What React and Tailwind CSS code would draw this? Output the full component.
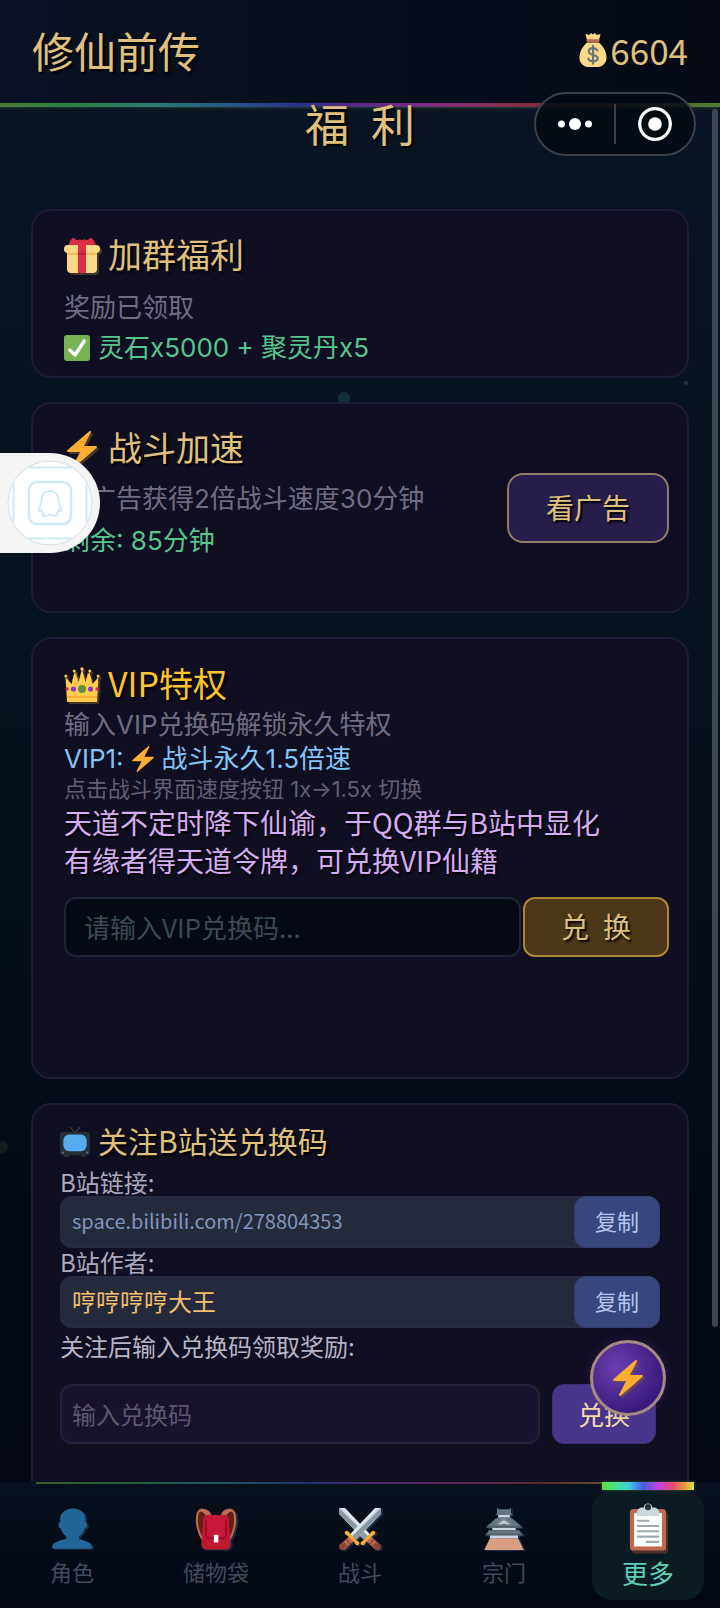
import React from "react";

function Icon({ size = "size-9", shadow = true, children }) {
  return (
    <svg
      viewBox="0 0 36 36"
      aria-hidden="true"
      className={`${size} shrink-0 ${shadow ? "drop-shadow-[2px_2px_0_rgba(120,95,50,0.5)]" : ""}`}
    >
      {children}
    </svg>
  );
}

const Bolt = () => (
  <path fill="#FFAC33" d="M32.938 15.651C32.792 15.26 32.418 15 32 15H19.925L26.89 1.458c.219-.426.106-.947-.271-1.243C26.437.071 26.218 0 26 0c-.233 0-.466.082-.653.243L18 6.588 3.347 19.243c-.316.273-.43.714-.284 1.105S3.582 21 4 21h12.075L9.11 34.542c-.219.426-.106.947.271 1.243.182.144.401.215.619.215.233 0 .466-.082.653-.243L18 29.412l14.653-12.655c.317-.273.43-.714.285-1.106z" />
);

const Check = () => (
  <>
    <rect width="36" height="36" rx="4" fill="#77B255" />
    <path fill="#FFF" d="M29.28 6.362c-1.156-.751-2.704-.422-3.458.736L14.936 23.877l-5.029-4.65c-1.014-.938-2.596-.875-3.533.138-.937 1.014-.875 2.596.139 3.533l7.209 6.666c.48.445 1.09.665 1.696.665.673 0 1.534-.282 2.099-1.139.332-.506 12.5-19.27 12.5-19.27.751-1.159.421-2.707-.737-3.458z" />
  </>
);

const Gift = () => (
  <>
    <path fill="#FDD888" d="M33 31a4 4 0 0 1-4 4H7a4 4 0 0 1-4-4V14h30z" />
    <path fill="#FCAB40" d="M3 15h30v1.5H3z" />
    <path fill="#FDD888" d="M36 11a4 4 0 0 1-4 4H4a4 4 0 0 1 0-8h28a4 4 0 0 1 4 4z" />
    <path fill="#DA2F47" d="M14 6h8v29h-8z" />
    <path fill="#DA2F47" d="M18 7H5c0-3 2-6 4-7 2-.5 2 2 4 2s3-1.500 5 .5c2-2 3-.5 5-.5s2-2.500 4-2c2 1 4 4 4 7z" />
    <path fill="#A0041E" opacity=".55" d="M14 15h8v1.500h-8z" />
  </>
);

const Crown = () => (
  <>
    <path fill="#F4900C" d="M14.200 13 12 5l-3.500 8zM27.500 13 24 5l-2.200 8z" />
    <path fill="#FFCC4D" d="m3 35-1.500-25 6 7 3-12 4 10 3.500-13 3.500 13 4-10 3 12 6-7L33 35z" />
    <circle cx="1.800" cy="9" r="1.500" fill="#FFCC4D" />
    <circle cx="10.200" cy="4" r="1.500" fill="#FFCC4D" />
    <circle cx="18" cy="2" r="1.700" fill="#FFCC4D" />
    <circle cx="25.800" cy="4" r="1.500" fill="#FFCC4D" />
    <circle cx="34.200" cy="9" r="1.500" fill="#FFCC4D" />
    <path fill="#FFAC33" d="M3 29h30v2H3z" />
    <circle cx="18" cy="22" r="4" fill="#5C913B" />
    <circle cx="9.500" cy="22" r="2.600" fill="#9236CC" />
    <circle cx="26.500" cy="22" r="2.600" fill="#9236CC" />
    <circle cx="3" cy="22" r="1.700" fill="#DA2F47" />
    <circle cx="33" cy="22" r="1.700" fill="#DA2F47" />
  </>
);

const Television = () => (
  <>
    <path d="M12 0l6 7 6-7" fill="none" stroke="#3b464f" strokeWidth="1.300" />
    <rect x="0" y="6" width="36" height="28" rx="4" fill="#252f36" />
    <path fill="#292F33" d="M4 32h7v4H5zM25 32h7l-1 4h-6z" />
    <rect x="4" y="9" width="28" height="20" rx="7" fill="#55ACEE" />
    <circle cx="3.500" cy="30.500" r="1.200" fill="#66757F" />
    <circle cx="32.500" cy="30.500" r="1.200" fill="#66757F" />
  </>
);

const MoneyBag = () => (
  <>
    <path fill="#FDD888" d="M31.900 22.500C31 17 27 12 24 10H12C9 12 5 17 4.100 22.500 2 30 7 36 13 36h10c6 0 11-6 8.900-13.500z" />
    <path fill="#FDD888" d="M12 9 10 1l4 1 2-2 2 1.500L20 0l2 2 4-1-2 8z" />
    <rect x="11" y="6.500" width="14" height="2.800" rx="1.400" fill="#BF6952" />
    <path d="M22.500 18.500c-1-2-2.600-2.500-4.500-2.500-2.700 0-4.500 1.300-4.500 3.500 0 5 9.500 2.500 9.500 7 0 2.400-2.300 3.500-5 3.500-2.400 0-4.300-1-5-3M18 13.500v19" fill="none" stroke="#67757F" strokeWidth="2.300" strokeLinecap="round" />
  </>
);

const Person = () => (
  <path fill="#226699" d="M24 26.799v-2.566c2-1.348 4.080-3.779 4.703-6.896.186.103.206.17.413.17.991 0 1.709-1.287 1.709-2.873 0-1.562-.823-2.827-1.794-2.865.187-.674.293-1.577.293-2.735C29.324 5.168 26 .527 18.541.527c-6.629 0-10.777 4.641-10.777 8.507 0 1.123.069 2.043.188 2.755-.911.137-1.629 1.352-1.629 2.845 0 1.587.804 2.873 1.796 2.873.206 0 .025-.067.209-.17C8.952 20.453 11 22.885 13 24.232v2.414c-5 .645-12 3.437-12 6.230v1.061C1 35 2.076 35 3.137 35h29.725C33.924 35 35 35 35 33.938v-1.061c0-2.615-6-5.225-11-6.078z" />
);

const Backpack = () => (
  <>
    <path fill="#662113" d="M3 2c-3 8-1 20 5 27l5-20zM33 2c3 8 1 20-5 27L23 9z" />
    <path d="M12 9C11 2 5-1 2.500 4 0 12 3 22 7 28M24 9c1-7 7-10 9.500-5C36 12 33 22 29 28" fill="none" stroke="#BF6952" strokeWidth="1.800" />
    <path fill="#BF6952" d="M4 1c5-1.500 9 1 10 6l-4 2C9 5 7 3 3 3zM32 1c-5-1.500-9 1-10 6l4 2c1-4 3-6 7-6z" />
    <path fill="#BE1931" d="M11 6h14c3 0 4 2 4 4l1.500 21c0 3-1.500 4.500-4 4.500h-17c-2.500 0-4-1.500-4-4.500L7 10c0-2 1-4 4-4z" />
    <path fill="#C8183A" d="M11 6h14c2 0 3 2 3 4v12c0 3-2 4.500-4 4.500H12c-2 0-4-1.500-4-4.500V10c0-2 1-4 3-4z" />
    <path d="M9.500 10v13c0 2 1 3 3 3h11c2 0 3-1 3-3V10" fill="none" stroke="#A0041E" strokeWidth="1.300" />
    <path fill="#FFF" d="M16.200 23h3.800v6.500h-3.800z" />
  </>
);

const Sword = () => (
  <>
    <path fill="#CCD6DD" d="M36 0v5L15 27l-5-4L31 0z" />
    <path fill="#8899A6" d="m36 0-25 24.500 3.500 2.500L36 5z" />
    <path fill="#E1E8ED" d="M31 0h3L10.500 24.500 9 23z" />
    <path fill="#BF6952" d="m8.500 24.500 4 4-8 7.500-4-4z" />
    <path d="m6 27 4 4M3.500 29.500l4 4" stroke="#8A4633" strokeWidth="1.300" />
    <path fill="#FFAC33" d="M5.500 20c1.500-1.200 3 0 3.500 1.500l6.500 6.500c1.500.5 2.600 2 1.500 3.300-1.500 1.500-3.300 0-3.500-1.500L7 23.500c-1.500-.5-3-2-1.500-3.500z" />
    <circle cx="2.800" cy="33.200" r="2.700" fill="#8A4633" />
  </>
);

const Swords = () => (
  <>
    <g transform="matrix(-1 0 0 1 36 0)"><Sword /></g>
    <Sword />
  </>
);

const Castle = () => (
  <>
    <path fill="#D99E82" d="M6 26h24l5 10H1z" />
    <path fill="#CCD6DD" d="M6 21h24v5H6zM8 14h20v5H8zM13 4h10v6H13z" />
    <path fill="#66757F" d="M12 0h1v1h10V0h1v5h1v1H11V5h1z" />
    <path fill="#66757F" d="m11 9 3-1h8l3 1 7 6v2H4v-2zM5 19h26l2.500 4H2.500z" />
    <path fill="#4F5D66" d="M3 15.500h30V17H3zM2 22h32v1.500H2z" />
    <path fill="#CCD6DD" d="m13 14 5-3.500 5 3.500h-3l-2-1-2 1z" />
    <path d="m12 13.500 6-4 6 4" fill="none" stroke="#8899A6" strokeWidth="1" />
  </>
);

const Clipboard = () => (
  <>
    <rect x="5" y="5" width="26" height="30" rx="2.500" fill="#C1694F" />
    <path fill="#FFF" d="M8 8h20v24H8z" />
    <path fill="#CCD6DD" d="M22 4h-1a3 3 0 0 0-6 0h-1c-2 0-4 1.500-4 3.500V10h16V7.500C26 5.500 24 4 22 4z" />
    <circle cx="18" cy="3.700" r="2.200" fill="#292F33" />
    <path d="M10 13.500h9M10 17.300h16M10 21.100h16M10 24.900h16M16.500 28.700H26" stroke="#99AAB5" strokeWidth="1.500" />
  </>
);

const CARD = "rounded-[20px] border-2 border-[#1e1b34] bg-[#100e21]";
const GOLD = "text-[#dfc07f] [text-shadow:2px_2px_2px_#000]";
// Inter for Latin letters and digits, Noto for the Chinese ones.
const MIXED = "font-['Inter','Noto_Sans_CJK_SC',sans-serif]";

function CardTitle({ icon, children, tone = GOLD }) {
  return (
    <h2 className={`flex items-center gap-2 text-[34px] leading-[42px] ${tone}`}>
      <span className="pt-1"><Icon>{icon}</Icon></span>
      <span>{children}</span>
    </h2>
  );
}

function CopyRow({ id, label, value, tone }) {
  return (
    <>
      <h3 id={id} className="text-2xl leading-7 text-[#a9a9bb]">{label}</h3>
      <div className="flex h-[52px] rounded-xl border-2 border-[#2a2b40] bg-[#242a3c]">
        <p className={`flex-1 self-center px-2.5 pb-0.5 ${tone}`}>{value}</p>
        <button aria-describedby={id} className="-my-0.5 -mr-0.5 w-[86px] rounded-xl border border-[#353f70] bg-[#37477b] pb-1 text-[22px] text-[#b9c6f2]">
          复制
        </button>
      </div>
    </>
  );
}

const TABS = [
  { label: "角色", art: <Person /> },
  { label: "储物袋", art: <Backpack /> },
  { label: "战斗", art: <Swords /> },
  { label: "宗门", art: <Castle /> },
  { label: "更多", art: <Clipboard />, active: true },
];

export default function App() {
  return (
    <div className="relative flex h-screen flex-col overflow-hidden bg-linear-to-b from-[#0a1424] via-[#06121d] via-40% to-[#030711] font-['Noto_Sans_CJK_SC',sans-serif]">
      <header className="relative flex h-[105px] shrink-0 items-center justify-between bg-linear-to-r from-[#0a1223] to-[#050a15] px-8 pb-1.5">
        <div className={`text-[42px] leading-[46px] ${GOLD}`}>修仙前传</div>
        <div className="flex items-center text-[35px] leading-[46px] text-[#dfc07f]">
          <Icon size="size-[34px]" shadow={false}><MoneyBag /></Icon>
          <span>6604</span>
        </div>
        <div className="absolute inset-x-0 -bottom-0.5 h-1 bg-[linear-gradient(90deg,#4f7a35_0%,#2f7f3c_8%,#2a7a72_22%,#26508a_33%,#2c2f8a_42%,#5a2a86_50%,#7d2c7e_60%,#85304f_70%,#6e2a28_80%,#5c5a28_90%,#4d7d35_100%)] shadow-[0_1px_3px_rgba(50,90,70,0.7)]" />
      </header>

      <i className="absolute top-[392px] left-[47%] size-3 rounded-full bg-[#12323a]" />
      <i className="absolute top-[381px] right-8 size-1 rounded-full bg-[#24343e]" />
      <i className="absolute top-[1141px] -left-1 size-3 rounded-full bg-[#161b20]" />

      <main className="relative -mt-5 min-h-0 flex-1 overflow-y-auto px-[31px] pt-1.5 [scrollbar-width:none]">
        <h1 className={`mb-[54px] text-center text-[44px] leading-[64px] ${GOLD}`}>福&ensp;利</h1>
        <div className="flex flex-col gap-6">
          <section className={`${CARD} pt-[22px] pr-4 pb-[7px] pl-[31px]`}>
            <CardTitle icon={<Gift />}>加群福利</CardTitle>
            <p className="mt-2.5 text-[26px] leading-[42px] text-[#716d80]">奖励已领取</p>
            <p className={`flex items-center gap-2 text-[26px] leading-[42px] text-[#57c58c] ${MIXED}`}>
              <Icon size="size-[26px]" shadow={false}><Check /></Icon>
              <span>灵石x5000 + 聚灵丹x5</span>
            </p>
          </section>

          <section className={`${CARD} flex min-h-[211px] items-center pr-[18px] pl-[31px]`}>
            <div className="flex-1 self-start pt-[22px]">
              <CardTitle icon={<Bolt />}>战斗加速</CardTitle>
              <p className={`mt-2.5 text-[26px] leading-[42px] text-[#716d80] ${MIXED}`}>看广告获得2倍战斗速度30分钟</p>
              <p className={`text-[26px] leading-[42px] text-[#57c58c] ${MIXED}`}>剩余: 85分钟</p>
            </div>
            <button className={`h-[70px] w-[162px] rounded-2xl border-2 border-[#927c68] bg-[#271d4b] pb-0.5 text-[28px] ${GOLD}`}>看广告</button>
          </section>

          <section className={`${CARD} min-h-[442px] pt-[23px] pr-[18px] pb-6 pl-[31px]`}>
            <CardTitle icon={<Crown />} tone="text-[#fcc42f] [text-shadow:2px_2px_2px_#000]">VIP特权</CardTitle>
            <div className={MIXED}>
              <p className="mt-1 text-[26px] leading-[34px] text-[#716d80]">输入VIP兑换码解锁永久特权</p>
              <p className="flex items-center gap-1.5 text-[26px] leading-[34px] text-[#83c5f8]">
                <span>VIP1:</span>
                <Icon size="size-[26px]" shadow={false}><Bolt /></Icon>
                <span>战斗永久1.5倍速</span>
              </p>
              <p className="text-[22px] leading-[27px] text-[#625f70]">点击战斗界面速度按钮 1x→1.5x 切换</p>
            </div>
            <p className="text-[28px] leading-[38px] text-[#d5adf2] [text-shadow:1px_2px_2px_#000]">
              天道不定时降下仙谕，于QQ群与B站中显化<br />有缘者得天道令牌，可兑换VIP仙籍
            </p>
            <form className="mt-[18px] flex gap-0.5" onSubmit={(e) => e.preventDefault()}>
              <input aria-label="VIP兑换码" placeholder="请输入VIP兑换码..." className="h-[60px] min-w-0 flex-1 rounded-xl border-2 border-[#1b2533] bg-[#050a14] px-[18px] pb-0.5 text-[26px] text-[#dfc07f] placeholder:text-[#3c4a51]" />
              <button className={`w-[146px] rounded-xl border-2 border-[#ab8533] bg-[#4c3817] pb-0.5 text-[28px] ${GOLD}`}>兑&ensp;换</button>
            </form>
          </section>

          <section className={`${CARD} px-[27px] pt-[15px] pb-24`}>
            <h2 className={`mb-2 flex items-center gap-2 text-[30px] leading-10 ${GOLD}`}>
              <span className="pt-1"><Icon size="size-[30px]" shadow={false}><Television /></Icon></span>
              <span>关注B站送兑换码</span>
            </h2>
            <CopyRow id="link" label="B站链接:" value="space.bilibili.com/278804353" tone="text-xl text-[#8195bd]" />
            <CopyRow id="author" label="B站作者:" value="哼哼哼哼大王" tone="text-2xl text-[#f4c06e]" />
            <p className="text-2xl leading-9 text-[#b7b5c4]">关注后输入兑换码领取奖励:</p>
            <form className="mt-5 flex gap-3 pr-1" onSubmit={(e) => e.preventDefault()}>
              <input aria-label="兑换码" placeholder="输入兑换码" className="h-[60px] min-w-0 flex-1 rounded-xl border-2 border-[#251f3d] bg-[#18122e] px-2.5 pb-0.5 text-2xl text-[#dfc07f] placeholder:text-[#5d586e]" />
              <button className="w-[104px] rounded-xl border border-[#3d3079] bg-[#47368b] pb-0.5 text-[26px] text-[#f5dfa5]">兑换</button>
            </form>
          </section>
        </div>
      </main>

      <nav className="relative grid h-[126px] shrink-0 grid-cols-5 bg-linear-to-b from-[#08111e] to-[#030812]">
        <div className="absolute inset-x-9 top-0 h-0.5 bg-[linear-gradient(90deg,#3a5a2c_0%,#24603a_15%,#1f5a66_28%,#23306e_42%,#4c2a70_52%,#5f285a_65%,#5c2a2c_78%,#5b5a2c_90%,#46702e_100%)]" />
        {TABS.map((tab) => (
          <a
            key={tab.label}
            href="#"
            aria-current={tab.active ? "page" : undefined}
            className={
              tab.active
                ? "relative mx-4 my-2 flex flex-col items-center rounded-[20px] bg-[#0b1b24] pt-3 text-[26px] leading-[42px] text-[#5fd0b9]"
                : "flex flex-col items-center pt-[26px] text-[22px] leading-[42px] text-[#3f4c5b]"
            }
          >
            {tab.active && (
              <i className="absolute inset-x-2.5 -top-2 h-2 bg-[linear-gradient(90deg,#5fe03c,#41e0a0_18%,#3fc8e0_30%,#4a5ae8_45%,#c840e0_62%,#e8506a_78%,#e89a40_90%,#d2e04c)] shadow-[0_0_3px_#3a6a2c]" />
            )}
            <svg viewBox="0 0 36 36" aria-hidden="true" className={tab.active ? "size-[50px] drop-shadow-[2px_3px_0_#4a2f2a]" : "size-[42px] drop-shadow-[2px_1px_0_#1b2d42]"}>
              {tab.art}
            </svg>
            <span>{tab.label}</span>
          </a>
        ))}
      </nav>

      <i className="absolute top-[109px] right-[2px] h-[1218px] w-1.5 rounded-full bg-[#40464f]" />

      <div className="absolute top-[92px] right-6 flex h-16 w-[162px] items-center rounded-full border-2 border-[#3b4148] bg-[#050b14]/85">
        <button aria-label="菜单" className="flex flex-1 justify-center">
          <svg viewBox="0 0 36 14" className="h-3.5 w-9" fill="#fff">
            <circle cx="4.500" cy="7" r="3.500" /><circle cx="18" cy="7" r="6" /><circle cx="31.500" cy="7" r="3.500" />
          </svg>
        </button>
        <span className="h-10 w-0.5 bg-[#3b4148]" />
        <button aria-label="关闭" className="flex flex-1 justify-center">
          <svg viewBox="0 0 34 34" className="size-[34px]">
            <circle cx="17" cy="17" r="15.300" fill="none" stroke="#fff" strokeWidth="3.200" /><circle cx="17" cy="17" r="6.800" fill="#fff" />
          </svg>
        </button>
      </div>

      <button aria-label="游戏助手" className="absolute top-[453px] left-0 flex h-[100px] w-[100px] items-center justify-end rounded-r-full bg-[#f3f4f3] pr-1">
        <svg viewBox="0 0 92 92" className="size-[92px]">
          <circle cx="46" cy="46" r="42" fill="#fff" stroke="#d5dde2" strokeWidth="1" />
          <g fill="none" stroke="#cfe9f8" strokeWidth="2">
            <path d="M24 10.500h44M24 81.500h44M9.500 27v38M82.500 27v38" />
            <rect x="25" y="25" width="42" height="42" rx="8" strokeWidth="2.500" />
            <path d="M46 34c-5.500 0-8.500 4-8.500 9.500 0 3.500-3 6.500-2.500 10.500.6.600 1.600 0 2.300-1 .4 1.500 1 2.700 1.900 3.600-1.400.9-1.200 2.400.5 2.400 2.700 0 4.600-.4 6.300-1.300 1.700.9 3.600 1.300 6.300 1.300 1.700 0 1.900-1.500.5-2.400.9-.9 1.500-2.100 1.900-3.600.7 1 1.700 1.600 2.300 1 .5-4-2.500-7-2.500-10.500C54.500 38 51.500 34 46 34z" />
          </g>
        </svg>
      </button>

      <button aria-label="加速" className="absolute right-[54px] bottom-[192px] flex size-[76px] items-center justify-center rounded-full border-[3px] border-[#a58a80] bg-radial-[at_35%_35%] from-[#6b3fb0] to-[#36197a] to-75% shadow-[0_0_12px_rgba(90,50,160,0.3)]">
        <Icon><Bolt /></Icon>
      </button>
    </div>
  );
}
